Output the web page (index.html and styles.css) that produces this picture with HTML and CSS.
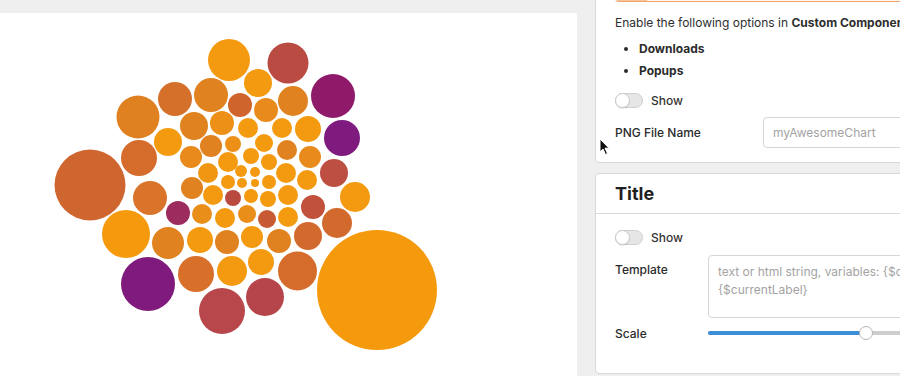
FILE: index.html
```html
<!DOCTYPE html>
<html lang="en">
<head>
<meta charset="utf-8">
<title>Bubble chart settings</title>
<link rel="stylesheet" href="styles.css">
</head>
<body>
<div class="page">
  <div class="chart-panel">
    <svg class="bubbles" width="577" height="363" viewBox="0 13 577 363" xmlns="http://www.w3.org/2000/svg">
      <g>
        <circle cx="229" cy="60" r="21" fill="#f49a10"/>
        <circle cx="288" cy="63" r="20.5" fill="#b94b43"/>
        <circle cx="333" cy="96" r="22" fill="#8f1a69"/>
        <circle cx="342" cy="138" r="18" fill="#7f1b7f"/>
        <circle cx="334" cy="173" r="14" fill="#bd4f42"/>
        <circle cx="355" cy="197" r="15" fill="#f49a10"/>
        <circle cx="337" cy="223" r="15" fill="#d36a2d"/>
        <circle cx="377" cy="290" r="60" fill="#f49a0c"/>
        <circle cx="90" cy="185" r="35.5" fill="#d0662f"/>
        <circle cx="138" cy="117" r="21.5" fill="#df8120"/>
        <circle cx="175" cy="99" r="17" fill="#d5702a"/>
        <circle cx="211" cy="95" r="17" fill="#e0821f"/>
        <circle cx="258" cy="83" r="14" fill="#f49a10"/>
        <circle cx="240" cy="105" r="12" fill="#d0642d"/>
        <circle cx="293" cy="101" r="15" fill="#e0821f"/>
        <circle cx="266" cy="110" r="12" fill="#e88b1c"/>
        <circle cx="194" cy="126" r="14" fill="#e0821f"/>
        <circle cx="222" cy="123" r="12" fill="#ec9018"/>
        <circle cx="248" cy="128" r="10" fill="#f49a10"/>
        <circle cx="282" cy="128" r="10" fill="#f49a10"/>
        <circle cx="308" cy="129" r="13" fill="#f49a10"/>
        <circle cx="168" cy="142" r="14" fill="#f49a10"/>
        <circle cx="211" cy="146" r="11" fill="#e0821f"/>
        <circle cx="233" cy="144" r="8" fill="#ec9018"/>
        <circle cx="264" cy="143" r="9" fill="#f49a10"/>
        <circle cx="287" cy="150" r="10" fill="#e0821f"/>
        <circle cx="139" cy="158" r="18" fill="#d56c2b"/>
        <circle cx="310" cy="157" r="11" fill="#e88b1c"/>
        <circle cx="191" cy="157" r="11" fill="#e88b1c"/>
        <circle cx="228" cy="162" r="10" fill="#f49a10"/>
        <circle cx="251" cy="156" r="8" fill="#f49a10"/>
        <circle cx="269" cy="162" r="8" fill="#f49a10"/>
        <circle cx="208" cy="173" r="10" fill="#f09612"/>
        <circle cx="241" cy="171" r="6" fill="#f49a10"/>
        <circle cx="255" cy="172" r="5" fill="#f49a10"/>
        <circle cx="286" cy="173" r="10" fill="#f49a10"/>
        <circle cx="192" cy="188" r="11" fill="#e0821f"/>
        <circle cx="228" cy="182" r="7" fill="#f49a10"/>
        <circle cx="242" cy="183" r="5" fill="#f49a10"/>
        <circle cx="255" cy="183" r="4" fill="#f49a10"/>
        <circle cx="269" cy="182" r="7" fill="#f49a10"/>
        <circle cx="213" cy="195" r="10" fill="#f49a10"/>
        <circle cx="233" cy="198" r="8" fill="#b94a40"/>
        <circle cx="251" cy="196" r="7" fill="#f49a10"/>
        <circle cx="268" cy="199" r="8" fill="#f49a10"/>
        <circle cx="288" cy="195" r="10" fill="#f49a10"/>
        <circle cx="307" cy="180" r="10" fill="#f49a10"/>
        <circle cx="202" cy="214" r="10" fill="#ea8e1a"/>
        <circle cx="225" cy="218" r="10" fill="#f49a10"/>
        <circle cx="247" cy="214" r="9" fill="#ea8e1a"/>
        <circle cx="267" cy="219" r="9" fill="#c75a33"/>
        <circle cx="288" cy="217" r="10" fill="#f49a10"/>
        <circle cx="313" cy="207" r="12" fill="#c1503c"/>
        <circle cx="308" cy="236" r="14" fill="#d36a2d"/>
        <circle cx="150" cy="198" r="17" fill="#d9742a"/>
        <circle cx="178" cy="213" r="12" fill="#9c2c5e"/>
        <circle cx="126" cy="234" r="24" fill="#f49a0c"/>
        <circle cx="168" cy="243" r="16" fill="#e0821f"/>
        <circle cx="200" cy="240" r="13" fill="#f49a10"/>
        <circle cx="227" cy="242" r="12" fill="#e0821f"/>
        <circle cx="252" cy="237" r="11" fill="#f49a10"/>
        <circle cx="279" cy="241" r="12" fill="#e0821f"/>
        <circle cx="148" cy="284" r="27" fill="#7e1b7c"/>
        <circle cx="196" cy="274" r="18" fill="#d8702a"/>
        <circle cx="232" cy="271" r="15" fill="#f49a10"/>
        <circle cx="261" cy="262" r="13" fill="#f49a10"/>
        <circle cx="297.5" cy="271" r="19.5" fill="#d56c2b"/>
        <circle cx="222" cy="311" r="23" fill="#b7474a"/>
        <circle cx="265" cy="297" r="19" fill="#b5454a"/>
      </g>
    </svg>
  </div>

  <div class="settings">
    <section class="card card-export">
      <div class="alert"><span class="alert-btn"></span></div>
      <p class="note">Enable the following options in <strong>Custom Component</strong></p>
      <ul class="opts">
        <li>Downloads</li>
        <li>Popups</li>
      </ul>
      <div class="toggle-row">
        <span class="toggle"><span class="knob"></span></span>
        <span class="toggle-label">Show</span>
      </div>
      <div class="field-row png-row">
        <label class="field-label png-label">PNG File Name</label>
        <div class="input"><span class="placeholder">myAwesomeChart</span></div>
      </div>
    </section>

    <section class="card card-title">
      <header class="card-head"><h2>Title</h2></header>
      <div class="card-body">
        <div class="toggle-row">
          <span class="toggle"><span class="knob"></span></span>
          <span class="toggle-label">Show</span>
        </div>
        <div class="field-row template-row">
          <label class="field-label tpl-label">Template</label>
          <div class="textarea"><span class="placeholder">text or html string, variables: {$currentValue}<br>{$currentLabel}</span></div>
        </div>
        <div class="field-row scale-row">
          <label class="field-label tpl-label">Scale</label>
          <div class="slider">
            <span class="track-fill"></span>
            <span class="thumb"></span>
          </div>
        </div>
      </div>
    </section>
  </div>

  <svg class="cursor" width="12" height="18" viewBox="0 0 12 18" xmlns="http://www.w3.org/2000/svg">
    <path d="M1 1 L1 14 L4 11 L6.5 16.5 L8.5 15.6 L6 10.2 L10 10.2 Z" fill="#111" stroke="#fff" stroke-width="1" stroke-linejoin="round"/>
  </svg>
</div>
</body>
</html>
```

FILE: styles.css
```css
* { box-sizing: border-box; }

html, body {
  margin: 0;
  padding: 0;
  width: 900px;
  height: 376px;
  overflow: hidden;
  background: #efefef;
  font-family: Inter, "Noto Sans", "Liberation Sans", sans-serif;
  color: #2b2b2b;
}

.page {
  position: relative;
  display: flex;
  align-items: flex-start;
  width: 900px;
  height: 376px;
}

.chart-panel {
  flex: 0 0 577px;
  width: 577px;
  height: 380px;
  margin-top: 13px;
  background: #fff;
}

.bubbles { display: block; }

.settings {
  flex: 0 0 330px;
  width: 330px;
  margin-left: 18px;
  margin-top: -31px;
  display: flex;
  flex-direction: column;
  gap: 10px;
}

.card {
  background: #fff;
  border: 1px solid #d9d9d9;
  border-radius: 4px;
}

.card-export {
  padding: 0 0 14px 19px;
}

.alert {
  height: 32px;
  margin-right: -1px;
  border: 1px solid #f1a469;
  border-top: none;
  border-right: none;
  border-radius: 0 0 0 4px;
  background: #fff6ee;
  position: relative;
}

.alert-btn {
  position: absolute;
  left: 0;
  bottom: 0;
  width: 31px;
  height: 4px;
  background: #f6c49a;
}

.note {
  margin: 12px 0 6px;
  font-size: 12px;
  line-height: 18px;
  white-space: nowrap;
  color: #2e2e2e;
}

.note strong { font-weight: 700; }

.opts {
  margin: 0;
  padding-left: 24px;
  font-size: 12px;
  line-height: 22px;
  font-weight: 700;
  color: #2b2b2b;
}

.toggle-row {
  display: flex;
  align-items: center;
  height: 16px;
  gap: 8px;
}

.card-export .toggle-row { margin-top: 10px; }

.toggle {
  display: inline-flex;
  align-items: center;
  width: 28px;
  height: 15px;
  border-radius: 8px;
  background: #e6e6e6;
  border: 1px solid #cfcfcf;
}

.knob {
  width: 15px;
  height: 15px;
  margin-left: -1px;
  border-radius: 50%;
  background: #fff;
  border: 1px solid #c9c9c9;
  box-shadow: 0 1px 1px rgba(0,0,0,0.08);
}

.toggle-label {
  font-size: 12px;
  font-weight: 500;
  color: #333;
}

.field-row {
  display: flex;
  align-items: center;
}

.png-row { margin-top: 9px; }

.field-label {
  flex: 0 0 auto;
  font-size: 12px;
  font-weight: 500;
  color: #2b2b2b;
  line-height: 18px;
}

.png-label { width: 148px; }

.input {
  width: 200px;
  height: 31px;
  border: 1px solid #d6d6d6;
  border-radius: 4px;
  display: flex;
  align-items: center;
  padding-left: 9px;
}

.placeholder {
  font-size: 12px;
  color: #a3a3a3;
  white-space: nowrap;
}

.card-head {
  height: 40px;
  border-bottom: 1px solid #d9d9d9;
  display: flex;
  align-items: center;
  padding-left: 19px;
}

.card-head h2 {
  margin: 0;
  font-size: 18px;
  font-weight: 700;
  color: #1f1f1f;
}

.card-body {
  padding: 15px 0 30px 19px;
}

.template-row {
  margin-top: 10px;
  align-items: flex-start;
}

.tpl-label { width: 93px; }

.template-row .tpl-label { padding-top: 6px; }

.textarea {
  width: 220px;
  height: 63px;
  border: 1px solid #d6d6d6;
  border-radius: 4px;
  padding: 6px 0 0 9px;
  line-height: 16px;
  overflow: hidden;
}

.scale-row {
  margin-top: 7px;
  height: 18px;
}

.slider {
  position: relative;
  width: 220px;
  height: 4px;
  margin-top: -2px;
  background: #cdcdcd;
  border-radius: 2px;
}

.track-fill {
  display: block;
  width: 158px;
  height: 4px;
  background: #3b8ed8;
  border-radius: 2px;
}

.thumb {
  position: absolute;
  left: 151px;
  top: -5px;
  width: 14px;
  height: 14px;
  border-radius: 50%;
  background: #fff;
  border: 1px solid #b5b5b5;
}

.cursor {
  position: absolute;
  left: 599px;
  top: 138px;
}
```
